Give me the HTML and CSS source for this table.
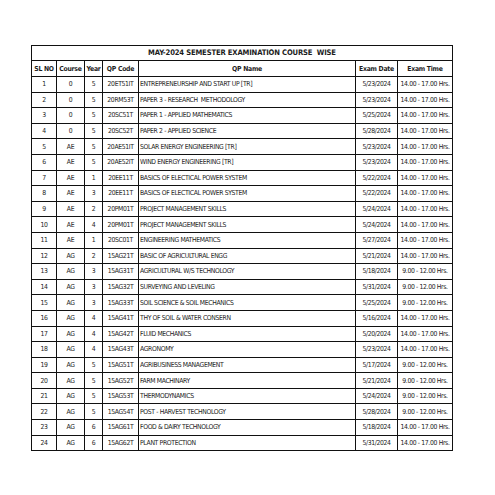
FILE: index.html
```html
<!DOCTYPE html>
<html>
<head>
<meta charset="utf-8">
<link rel="stylesheet" href="styles.css">
</head>
<body>
<div class="page">
<table class="sheet">
<colgroup>
<col class="c-sl"><col class="c-course"><col class="c-year"><col class="c-code"><col class="c-name"><col class="c-date"><col class="c-time">
</colgroup>
<thead>
<tr class="title-row"><th colspan="7">MAY-2024 SEMESTER EXAMINATION COURSE&nbsp; WISE</th></tr>
<tr class="head-row"><th>SL NO</th><th>Course</th><th>Year</th><th>QP Code</th><th>QP Name</th><th>Exam Date</th><th>Exam Time</th></tr>
</thead>
<tbody>
<tr><td>1</td><td>0</td><td>5</td><td>20ET51IT</td><td class="name">ENTREPRENEURSHIP AND START UP [TR]</td><td>5/23/2024</td><td>14.00 - 17.00 Hrs.</td></tr>
<tr><td>2</td><td>0</td><td>5</td><td>20RM53T</td><td class="name">PAPER 3 - RESEARCH&nbsp; METHODOLOGY</td><td>5/23/2024</td><td>14.00 - 17.00 Hrs.</td></tr>
<tr><td>3</td><td>0</td><td>5</td><td>20SC51T</td><td class="name">PAPER 1 - APPLIED MATHEMATICS</td><td>5/25/2024</td><td>14.00 - 17.00 Hrs.</td></tr>
<tr><td>4</td><td>0</td><td>5</td><td>20SC52T</td><td class="name">PAPER 2 - APPLIED SCIENCE</td><td>5/28/2024</td><td>14.00 - 17.00 Hrs.</td></tr>
<tr><td>5</td><td>AE</td><td>5</td><td>20AE51IT</td><td class="name">SOLAR ENERGY ENGINEERING [TR]</td><td>5/23/2024</td><td>14.00 - 17.00 Hrs.</td></tr>
<tr><td>6</td><td>AE</td><td>5</td><td>20AE52IT</td><td class="name">WIND ENERGY ENGINEERING [TR]</td><td>5/23/2024</td><td>14.00 - 17.00 Hrs.</td></tr>
<tr><td>7</td><td>AE</td><td>1</td><td>20EE11T</td><td class="name">BASICS OF ELECTICAL POWER SYSTEM</td><td>5/22/2024</td><td>14.00 - 17.00 Hrs.</td></tr>
<tr><td>8</td><td>AE</td><td>3</td><td>20EE11T</td><td class="name">BASICS OF ELECTICAL POWER SYSTEM</td><td>5/22/2024</td><td>14.00 - 17.00 Hrs.</td></tr>
<tr><td>9</td><td>AE</td><td>2</td><td>20PM01T</td><td class="name">PROJECT MANAGEMENT SKILLS</td><td>5/24/2024</td><td>14.00 - 17.00 Hrs.</td></tr>
<tr><td>10</td><td>AE</td><td>4</td><td>20PM01T</td><td class="name">PROJECT MANAGEMENT SKILLS</td><td>5/24/2024</td><td>14.00 - 17.00 Hrs.</td></tr>
<tr><td>11</td><td>AE</td><td>1</td><td>20SC01T</td><td class="name">ENGINEERING MATHEMATICS</td><td>5/27/2024</td><td>14.00 - 17.00 Hrs.</td></tr>
<tr><td>12</td><td>AG</td><td>2</td><td>15AG21T</td><td class="name">BASIC OF AGRICULTURAL ENGG</td><td>5/21/2024</td><td>14.00 - 17.00 Hrs.</td></tr>
<tr><td>13</td><td>AG</td><td>3</td><td>15AG31T</td><td class="name">AGRICULTURAL W/S TECHNOLOGY</td><td>5/18/2024</td><td>9.00 - 12.00 Hrs.</td></tr>
<tr><td>14</td><td>AG</td><td>3</td><td>15AG32T</td><td class="name">SURVEYING AND LEVELING</td><td>5/31/2024</td><td>9.00 - 12.00 Hrs.</td></tr>
<tr><td>15</td><td>AG</td><td>3</td><td>15AG33T</td><td class="name">SOIL SCIENCE &amp; SOIL MECHANICS</td><td>5/25/2024</td><td>9.00 - 12.00 Hrs.</td></tr>
<tr><td>16</td><td>AG</td><td>4</td><td>15AG41T</td><td class="name">THY OF SOIL &amp; WATER CONSERN</td><td>5/16/2024</td><td>14.00 - 17.00 Hrs.</td></tr>
<tr><td>17</td><td>AG</td><td>4</td><td>15AG42T</td><td class="name">FLUID MECHANICS</td><td>5/20/2024</td><td>14.00 - 17.00 Hrs.</td></tr>
<tr><td>18</td><td>AG</td><td>4</td><td>15AG43T</td><td class="name">AGRONOMY</td><td>5/23/2024</td><td>14.00 - 17.00 Hrs.</td></tr>
<tr><td>19</td><td>AG</td><td>5</td><td>15AG51T</td><td class="name">AGRIBUSINESS MANAGEMENT</td><td>5/17/2024</td><td>9.00 - 12.00 Hrs.</td></tr>
<tr><td>20</td><td>AG</td><td>5</td><td>15AG52T</td><td class="name">FARM MACHINARY</td><td>5/21/2024</td><td>9.00 - 12.00 Hrs.</td></tr>
<tr><td>21</td><td>AG</td><td>5</td><td>15AG53T</td><td class="name">THERMODYNAMICS</td><td>5/24/2024</td><td>9.00 - 12.00 Hrs.</td></tr>
<tr><td>22</td><td>AG</td><td>5</td><td>15AG54T</td><td class="name">POST - HARVEST TECHNOLOGY</td><td>5/28/2024</td><td>9.00 - 12.00 Hrs.</td></tr>
<tr><td>23</td><td>AG</td><td>6</td><td>15AG61T</td><td class="name">FOOD &amp; DAIRY TECHNOLOGY</td><td>5/18/2024</td><td>14.00 - 17.00 Hrs.</td></tr>
<tr><td>24</td><td>AG</td><td>6</td><td>15AG62T</td><td class="name">PLANT PROTECTION</td><td>5/31/2024</td><td>14.00 - 17.00 Hrs.</td></tr>
</tbody>
</table>
</div>
</body>
</html>
```
FILE: styles.css
```css
html, body {
  margin: 0;
  padding: 0;
  background: #fff;
}
.page {
  padding: 45px 0 0 31px;
}
.sheet {
  border-collapse: collapse;
  table-layout: fixed;
  width: 421px;
  font-family: "DejaVu Sans Condensed", "Liberation Sans", sans-serif;
  font-size: 6.8px;
  letter-spacing: -0.35px;
  color: #1c1c1c;
}
.c-sl { width: 25px; }
.c-course { width: 28px; }
.c-year { width: 18px; }
.c-code { width: 36px; }
.c-name { width: 217px; }
.c-date { width: 42px; }
.c-time { width: 55px; }
.sheet th, .sheet td {
  border: 1px solid #111;
  padding: 0;
  text-align: center;
  white-space: nowrap;
  overflow: hidden;
  line-height: 14px;
}
.sheet tbody tr { height: 15.6px; }
.sheet th {
  font-weight: bold;
  letter-spacing: -0.25px;
}
.title-row { height: 15px; }
.title-row th {
  font-size: 7.6px;
  letter-spacing: -0.15px;
}
.head-row { height: 16px; }
.sheet td.name {
  text-align: left;
  padding-left: 1px;
}
```
